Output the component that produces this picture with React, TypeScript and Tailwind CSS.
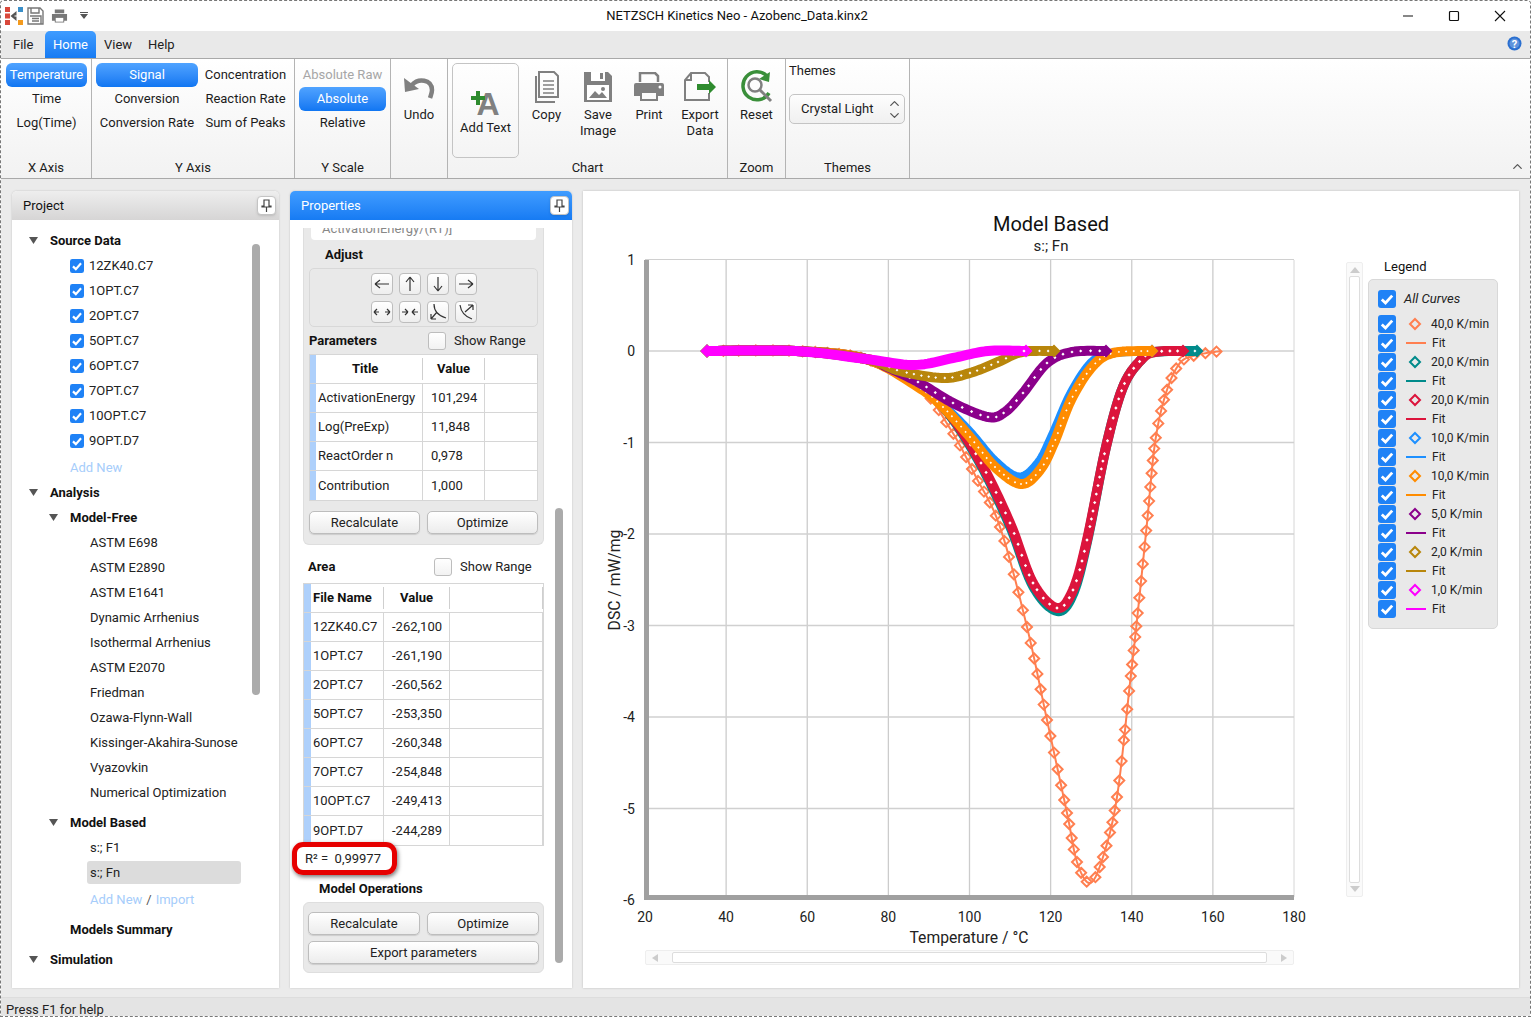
import { ChevronUp, ChevronDown } from 'lucide-react';

const FONT = "font-['Roboto',sans-serif]";

type Pt = [number, number];

function sample(keys: Pt[], seg = 12): Pt[] {
  const out: Pt[] = [];
  for (let i = 0; i < keys.length - 1; i++) {
    const p0 = keys[Math.max(i - 1, 0)];
    const p1 = keys[i];
    const p2 = keys[i + 1];
    const p3 = keys[Math.min(i + 2, keys.length - 1)];
    for (let k = 0; k < seg; k++) {
      const t = k / seg;
      const f = (a: number, b: number, c: number, d: number) =>
        0.5 * (2 * b + (c - a) * t + (2 * a - 5 * b + 4 * c - d) * t * t + (3 * b - a - 3 * c + d) * t * t * t);
      out.push([f(p0[0], p1[0], p2[0], p3[0]), f(p0[1], p1[1], p2[1], p3[1])]);
    }
  }
  out.push(keys[keys.length - 1]);
  return out;
}

function diamond([x, y]: Pt, r: number) {
  return `M${x.toFixed(1)} ${(y - r).toFixed(1)}L${(x + r).toFixed(1)} ${y.toFixed(1)}L${x.toFixed(1)} ${(y + r).toFixed(1)}L${(x - r).toFixed(1)} ${y.toFixed(1)}Z`;
}

function markers(pts: Pt[], spacing: number, r: number) {
  let d = '';
  let acc = spacing;
  for (let i = 0; i < pts.length; i++) {
    if (i > 0) acc += Math.hypot(pts[i][0] - pts[i - 1][0], pts[i][1] - pts[i - 1][1]);
    if (acc >= spacing) {
      acc = 0;
      d += diamond(pts[i], r);
    }
  }
  return d;
}

const base: Pt[] = [[707, 351], [796, 351], [866, 359]];

// dense series read as a fat band with small white holes, only 40 K/min shows open diamonds
const series: { color: string; band?: number; dot?: number; gap?: number; keys: Pt[] }[] = [
  {
    color: '#ff7f50',
    keys: [...base, [918, 385], [951, 430], [976, 477], [1000, 527], [1027, 627], [1047, 720], [1067, 813], [1077, 862], [1090, 883], [1103, 857], [1117, 797], [1130, 683], [1137, 620], [1147, 523], [1155, 443], [1166, 393], [1180, 363], [1197, 355], [1221, 351]],
  },
  {
    color: '#008b8b', band: 10, dot: 1.5, gap: 7.5,
    keys: [...base, [918, 385], [949, 414], [981, 465], [1010, 526], [1033, 586], [1057, 611], [1073, 594], [1087, 542], [1106, 447], [1123, 387], [1141, 360], [1155, 352], [1197, 351]],
  },
  {
    color: '#dc143c', band: 10, dot: 1.7, gap: 7.5,
    keys: [...base, [918, 385], [949, 413], [981, 463], [1010, 523], [1033, 583], [1057, 608], [1073, 590], [1087, 540], [1106, 447], [1123, 387], [1141, 360], [1155, 352], [1183, 351]],
  },
  {
    color: '#1e90ff', band: 9,
    keys: [...base, [918, 385], [943, 405], [970, 432], [995, 461], [1019, 477], [1038, 463], [1052, 436], [1071, 393], [1092, 362], [1113, 353], [1152, 351]],
  },
  {
    color: '#ff8c00', band: 10, dot: 1.2, gap: 5.5,
    keys: [...base, [918, 387], [943, 407], [970, 437], [995, 467], [1021, 484], [1040, 470], [1054, 443], [1071, 400], [1092, 367], [1113, 353], [1152, 351]],
  },
  {
    color: '#8b008b', band: 10, dot: 1.6, gap: 7.5,
    keys: [...base, [887, 367], [918, 382], [953, 403], [988, 417], [1005, 412], [1023, 393], [1047, 363], [1072, 352], [1106, 351]],
  },
  {
    color: '#b8860b', band: 10, dot: 1.4, gap: 7,
    keys: [...base, [900, 371], [942, 378], [970, 373], [998, 362], [1022, 352], [1054, 351]],
  },
  {
    color: '#ff00ff', band: 10,
    keys: [[707, 351], [796, 351], [866, 359], [914, 365], [953, 358], [988, 351], [1026, 351]],
  },
];

const xTicks = [40, 60, 80, 100, 120, 140, 160];
const xPos = (v: number) => 645 + ((v - 20) / 160) * 649;
const yPos = (v: number) => 351 - v * 91.5;

function Chart() {
  return (
    <svg viewBox="583 191 757 758" className="w-[757px] h-[758px] block">
      <text x="1051" y="231" textAnchor="middle" fontSize="20" fill="#111">Model Based</text>
      <text x="1051" y="251" textAnchor="middle" fontSize="15" fill="#222">s:; Fn</text>
      {xTicks.map((v) => (
        <line key={v} x1={xPos(v)} x2={xPos(v)} y1="260" y2="897" stroke="#cccccc" strokeWidth="1.3" />
      ))}
      <line x1="1294" x2="1294" y1="260" y2="897" stroke="#d6d6d6" strokeWidth="1" />
      {[1, 0, -1, -2, -3, -4, -5].map((v) => (
        <line key={v} x1="645" x2="1294" y1={yPos(v)} y2={yPos(v)} stroke="#d0d0d0" strokeWidth={v === 1 ? 1 : 1.3} />
      ))}
      {series.map((s) => {
        const pts = sample(s.keys);
        const line = pts.map((p) => p.join(',')).join(' ');
        if (!s.band) {
          return (
            <g key={s.color}>
              <polyline points={line} fill="none" stroke={s.color} strokeWidth="2" />
              <path d={markers(pts, 10.5, 5)} fill="none" stroke={s.color} strokeWidth="2" />
            </g>
          );
        }
        return (
          <g key={s.color}>
            <polyline points={line} fill="none" stroke={s.color} strokeWidth={s.band} strokeLinejoin="round" />
            <path d={diamond(pts[0], 6.5) + diamond(pts[pts.length - 1], 6.5)} fill={s.color} />
            {s.dot && <path d={markers(pts, s.gap ?? 7, s.dot)} fill="#fff" />}
          </g>
        );
      })}
      <path d={diamond([1024, 351], 1.6)} fill="#fff" />
      <rect x="644" y="260" width="5" height="640" fill="#a0a0a0" />
      <rect x="644" y="895" width="650" height="5" fill="#a0a0a0" />
      {[1, 0, -1, -2, -3, -4, -5, -6].map((v) => (
        <text key={v} x="635" y={(v === -6 ? 900 : yPos(v)) + 5} textAnchor="end" fontSize="14" fill="#222">{v}</text>
      ))}
      {[20, 40, 60, 80, 100, 120, 140, 160, 180].map((v) => (
        <text key={v} x={xPos(v)} y="922" textAnchor="middle" fontSize="14" fill="#222">{v}</text>
      ))}
      <text x="969" y="943" textAnchor="middle" fontSize="15.7" fill="#222">Temperature / °C</text>
      <text x="620" y="580" textAnchor="middle" fontSize="15.7" fill="#222" transform="rotate(-90 620 580)">DSC / mW/mg</text>
    </svg>
  );
}

function Check({ size = 14 }: { size?: number }) {
  return (
    <svg width={size} height={size} viewBox="0 0 18 18" className="shrink-0 block">
      <rect width="18" height="18" rx="3" fill="#1f82f6" />
      <path d="M3.800 9.500 L7.500 13 L14.200 5.600" fill="none" stroke="#fff" strokeWidth="2.800" />
    </svg>
  );
}

function RibbonItem({ label, on, muted }: { label: string; on?: boolean; muted?: boolean }) {
  return (
    <div
      className={`h-[24px] flex items-center justify-center rounded-[6px] text-[13px] whitespace-nowrap ${
        on ? 'bg-gradient-to-b from-[#4fa3ff] to-[#0f76f2] text-white' : muted ? 'text-[#a6a6a6]' : 'text-[#1c1c1c]'
      }`}
    >
      {label}
    </div>
  );
}

function Group({ width, label, children }: { width: string; label: string; children: React.ReactNode }) {
  return (
    <div className={`${width} shrink-0 h-full flex flex-col border-r border-[#b4b4b4]`}>
      <div className="flex-1 min-h-0">{children}</div>
      <div className="h-[21px] flex items-center justify-center text-[13px] text-[#1c1c1c]">{label}</div>
    </div>
  );
}

function LargeBtn({ w, label, top = 'mt-[10px]', children }: { w: string; label: string; top?: string; children: React.ReactNode }) {
  return (
    <div className={`${w} flex flex-col items-center text-[13px] leading-[16px] text-[#1c1c1c] text-center`}>
      <div className={`h-[36px] w-full flex items-center justify-center mb-[2px] ${top}`}>{children}</div>
      <div>{label}</div>
    </div>
  );
}

function Pin() {
  return (
    <div className="w-[19px] h-[19px] rounded-[4px] bg-white border border-[#c4c4c4] shadow-sm flex items-center justify-center">
      <svg width="11" height="13" viewBox="0 0 11 13">
        <path d="M3 1h5v6h2v1H1V7h2zM5.500 8v5" fill="none" stroke="#444" strokeWidth="1.200" />
      </svg>
    </div>
  );
}

function Tri({ className = '' }: { className?: string }) {
  return (
    <svg width="9" height="7" viewBox="0 0 9 7" className={`block shrink-0 ${className}`}>
      <path d="M0 0h9L4.500 7z" fill="#555" />
    </svg>
  );
}

function Head({ label, pad, className = '' }: { label: string; pad: string; className?: string }) {
  return (
    <div className={`h-[25px] flex items-center ${pad} ${className}`}>
      <Tri />
      <span className="ml-[12px] text-[13px] font-bold text-[#111]">{label}</span>
    </div>
  );
}

const sourceFiles = ['12ZK40.C7', '1OPT.C7', '2OPT.C7', '5OPT.C7', '6OPT.C7', '7OPT.C7', '10OPT.C7', '9OPT.D7'];
const modelFree = ['ASTM E698', 'ASTM E2890', 'ASTM E1641', 'Dynamic Arrhenius', 'Isothermal Arrhenius', 'ASTM E2070', 'Friedman', 'Ozawa-Flynn-Wall', 'Kissinger-Akahira-Sunose', 'Vyazovkin', 'Numerical Optimization'];

function ProjectPanel() {
  return (
    <div className="w-[267px] shrink-0 flex flex-col bg-white shadow-[0_0_2px_#bbb] rounded-t-[5px]">
      <div className="h-[29px] shrink-0 flex items-center justify-between pl-[11px] pr-[3px] rounded-t-[5px] bg-gradient-to-b from-[#eeeeee] to-[#d6d5d5] text-[13px] text-[#111]">
        Project
        <Pin />
      </div>
      <div className="relative flex-1 pt-[8px]">
        <div className="absolute left-[240px] top-[24px] w-[8px] h-[451px] rounded-[4px] bg-[#ababab]" />
        <Head label="Source Data" pad="pl-[17px]" />
        {sourceFiles.map((f) => (
          <div key={f} className="h-[25px] flex items-center pl-[58px] gap-[5px] text-[13px] text-[#222]">
            <Check />
            {f}
          </div>
        ))}
        <div className="h-[25px] mt-[2px] flex items-center pl-[58px] text-[13px] text-[#a6cdfb]">Add New</div>
        <Head label="Analysis" pad="pl-[17px]" />
        <Head label="Model-Free" pad="pl-[37px]" />
        {modelFree.map((m) => (
          <div key={m} className="h-[25px] flex items-center pl-[78px] text-[13px] text-[#222]">{m}</div>
        ))}
        <Head label="Model Based" pad="pl-[37px]" className="mt-[5px]" />
        <div className="h-[25px] flex items-center pl-[78px] text-[13px] text-[#222]">s:; F1</div>
        <div className="h-[25px] py-[1px] ml-[75px] w-[154px]">
          <div className="h-[23px] flex items-center pl-[3px] rounded-[3px] bg-[#dcdcdc] text-[13px] text-[#222]">s:; Fn</div>
        </div>
        <div className="h-[25px] mt-[2px] flex items-center pl-[78px] text-[13px] text-[#a6cdfb]">
          Add New <span className="text-[#555] mx-[4px]">/</span> Import
        </div>
        <div className="h-[25px] mt-[5px] flex items-center pl-[58px] text-[13px] font-bold text-[#111]">Models Summary</div>
        <Head label="Simulation" pad="pl-[17px]" className="mt-[5px]" />
      </div>
    </div>
  );
}

function Btn({ label, className = '' }: { label: string; className?: string }) {
  return (
    <div className={`h-[23px] flex items-center justify-center rounded-[5px] border border-[#bdbdbd] bg-gradient-to-b from-white to-[#ececec] shadow-[0_1px_1px_#ccc] text-[13px] text-[#222] ${className}`}>
      {label}
    </div>
  );
}

function Empty({ className = '' }: { className?: string }) {
  return <div className={`w-[18px] h-[18px] rounded-[3px] border border-[#bdbdbd] bg-gradient-to-b from-white to-[#f2f2f2] ${className}`} />;
}

function AdjustBtn({ d }: { d: string }) {
  return (
    <div className="w-[22px] h-[22px] rounded-[4px] border border-[#bdbdbd] bg-gradient-to-b from-white to-[#eeeeee] flex items-center justify-center">
      <svg width="18" height="18" viewBox="0 0 18 18">
        <path d={d} fill="none" stroke="#333" strokeWidth="1.200" />
      </svg>
    </div>
  );
}

const adjustIcons = [
  'M2 9h14M2 9l5-4M2 9l5 4',
  'M9 2v14M9 2L5 7M9 2l4 5',
  'M9 16V2M9 16l-4-5M9 16l4-5',
  'M16 9H2M16 9l-5-4M16 9l-5 4',
  'M1 9h5M1 9l3-3M1 9l3 3M17 9h-5M17 9l-3-3M17 9l-3 3',
  'M7 9H1M7 9L4 6M7 9l-3 3M11 9h6M11 9l3-3M11 9l3 3',
  'M5 1c0 8 5 12 12 14M2 16L8 9M2 16h5M2 16v-5',
  'M3 2c1 7 6 12 12 14M8 9l8-7M16 2h-5M16 2v5',
];

function DataTable({ cols, strip, rows, header, firstPad }: { cols: string[]; strip: string; rows: string[][]; header: string[]; firstPad: string }) {
  return (
    <div className="border border-[#d6d6d6] bg-white text-[13px] text-[#222]">
      <div className="flex h-[29px] border-b border-[#d6d6d6]">
        <div className={`${strip} bg-[#aed0fb] shrink-0`} />
        {header.map((h, i) => (
          <div key={h} className={`${cols[i]} shrink-0 font-bold text-[#111] flex items-center`}>
            <div className={`h-[22px] w-full flex items-center border-r border-[#cfcfcf] ${i === 0 ? firstPad : 'justify-center'}`}>{h}</div>
          </div>
        ))}
      </div>
      {rows.map((r, j) => (
        <div key={r[0]} className={`flex h-[29px] ${j < rows.length - 1 ? 'border-b border-[#d6d6d6]' : ''}`}>
          <div className={`${strip} bg-[#aed0fb] shrink-0`} />
          {r.map((c, i) => (
            <div key={i} className={`${cols[i]} shrink-0 flex items-center border-r border-[#d6d6d6] ${i === 0 ? 'pl-[2px]' : 'pl-[8px]'}`}>{c}</div>
          ))}
        </div>
      ))}
    </div>
  );
}

function PropertiesPanel() {
  return (
    <div className="w-[282px] shrink-0 flex flex-col bg-white rounded-t-[5px] shadow-[0_0_2px_#bbb]">
      <div className="h-[29px] shrink-0 flex items-center justify-between pl-[11px] pr-[3px] rounded-t-[5px] bg-gradient-to-b from-[#3f9cff] to-[#167bf3] text-[13px] text-white">
        Properties
        <Pin />
      </div>
      <div className="relative flex-1 pt-[8px] pl-[13px] overflow-hidden">
        <div className="absolute left-[265px] top-[288px] w-[8px] h-[455px] rounded-[4px] bg-[#ababab]" />
        <div className="w-[241px] rounded-b-[6px] bg-[#e9e9e9] px-[5px] pb-[10px] border border-t-0 border-[#dedede]">
          <div className="h-[12px] mx-[2px] bg-white rounded-b-[4px] overflow-hidden pl-[11px] text-[13px] leading-[12px] text-[#888]">
            <div className="-mt-[7px] leading-[16px]">ActivationEnergy/(RT)]</div>
          </div>
          <div className="h-[28px] flex items-center pl-[16px] pt-[2px] text-[13px] font-bold text-[#111]">Adjust</div>
          <div className="h-[59px] rounded-[5px] border border-[#d8d8d8] flex flex-col items-center justify-center gap-[6px]">
            <div className="flex gap-[6px]">
              {adjustIcons.slice(0, 4).map((d) => <AdjustBtn key={d} d={d} />)}
            </div>
            <div className="flex gap-[6px]">
              {adjustIcons.slice(4).map((d) => <AdjustBtn key={d} d={d} />)}
            </div>
          </div>
          <div className="h-[27px] flex items-center text-[13px] text-[#222]">
            <span className="font-bold text-[#111] w-[119px]">Parameters</span>
            <Empty />
            <span className="ml-[8px]">Show Range</span>
          </div>
          <DataTable
            strip="w-[6px]"
            firstPad="pl-[36px]"
            cols={['w-[107px]', 'w-[62px]', 'w-[53px]']}
            header={['Title', 'Value', ' ']}
            rows={[
              ['ActivationEnergy', '101,294', ''],
              ['Log(PreExp)', '11,848', ''],
              ['ReactOrder n', '0,978', ''],
              ['Contribution', '1,000', ''],
            ]}
          />
          <div className="flex gap-[7px] mt-[10px]">
            <Btn label="Recalculate" className="w-[111px]" />
            <Btn label="Optimize" className="w-[111px]" />
          </div>
        </div>
        <div className="w-[241px] h-[38px] pt-[6px] flex items-center text-[13px] text-[#222]">
          <span className="font-bold text-[#111] ml-[5px] w-[126px]">Area</span>
          <Empty />
          <span className="ml-[8px]">Show Range</span>
        </div>
        <div className="w-[241px]">
          <DataTable
            strip="w-[7px]"
            firstPad="pl-[2px]"
            cols={['w-[73px]', 'w-[66px]', 'w-[93px]']}
            header={['File Name', 'Value', ' ']}
            rows={[
              ['12ZK40.C7', '-262,100', ''],
              ['1OPT.C7', '-261,190', ''],
              ['2OPT.C7', '-260,562', ''],
              ['5OPT.C7', '-253,350', ''],
              ['6OPT.C7', '-260,348', ''],
              ['7OPT.C7', '-254,848', ''],
              ['10OPT.C7', '-249,413', ''],
              ['9OPT.D7', '-244,289', ''],
            ]}
          />
        </div>
        <div className="relative h-[26px] flex items-center pl-[2px] text-[13px] text-[#222] whitespace-pre">
          R² =  0,99977
          <div className="absolute -left-[11px] -top-[4px] w-[105px] h-[33px] rounded-[11px] border-[5px] border-[#e60000] shadow-[1px_2px_4px_#777]" />
        </div>
        <div className="h-[30px] pt-[3px] flex items-center pl-[16px] text-[13px] font-bold text-[#111]">Model Operations</div>
        <div className="w-[241px] rounded-[6px] bg-[#e9e9e9] border border-[#dedede] px-[4px] pt-[9px] pb-[8px] flex flex-col gap-[6px]">
          <div className="flex gap-[7px]">
            <Btn label="Recalculate" className="w-[112px]" />
            <Btn label="Optimize" className="w-[112px]" />
          </div>
          <Btn label="Export parameters" className="w-[231px]" />
        </div>
      </div>
    </div>
  );
}

const legend: [string, string][] = [
  ['40,0 K/min', '#ff7f50'],
  ['20,0 K/min', '#008b8b'],
  ['20,0 K/min', '#dc143c'],
  ['10,0 K/min', '#1e90ff'],
  ['10,0 K/min', '#ff8c00'],
  ['5,0 K/min', '#8b008b'],
  ['2,0 K/min', '#b8860b'],
  ['1,0 K/min', '#ff00ff'],
];

function Legend() {
  return (
    <div className="w-[130px] ml-[5px] shrink-0 pt-[64px]">
      <div className="h-[24px] flex items-center pl-[16px] text-[13px] text-[#111]">Legend</div>
      <div className="h-[350px] rounded-[5px] bg-[#e9e9e9] border border-[#d8d8d8] pl-[9px] pt-[9px]">
        <div className="h-[19px] flex items-center text-[13px] italic text-[#222]">
          <Check size={18} />
          <span className="ml-[8px]">All Curves</span>
        </div>
        <div className="mt-[6px]">
          {legend.map(([label, color], i) => (
            <div key={i}>
              <div className="h-[19px] flex items-center text-[12px] text-[#222]">
                <Check size={18} />
                <svg width="14" height="14" viewBox="0 0 14 14" className="ml-[12px] shrink-0">
                  <path d="M7 2l5 5-5 5-5-5z" fill="none" stroke={color} strokeWidth="2" />
                </svg>
                <span className="ml-[9px] whitespace-nowrap">{label}</span>
              </div>
              <div className="h-[19px] flex items-center text-[12px] text-[#222]">
                <Check size={18} />
                <div className="ml-[10px] w-[20px] h-[2px]" style={{ backgroundColor: color }} />
                <span className="ml-[6px]">Fit</span>
              </div>
            </div>
          ))}
        </div>
      </div>
    </div>
  );
}

function ChartPanel() {
  return (
    <div className="w-[936px] shrink-0 flex bg-white shadow-[0_0_2px_#bbb]">
      <div className="w-[757px] shrink-0">
        <Chart />
        <div className="ml-[62px] mt-[1px] w-[649px] h-[15px] flex items-center gap-[14px] px-[6px] bg-[#fafafa] border border-[#eeeeee] rounded-[2px]">
          <svg width="6" height="8" viewBox="0 0 6 8" className="shrink-0"><path d="M6 0v8L0 4z" fill="#cccccc" /></svg>
          <div className="flex-1 h-[11px] border border-[#dddddd] rounded-[2px] bg-white" />
          <svg width="6" height="8" viewBox="0 0 6 8" className="shrink-0"><path d="M0 0v8l6-4z" fill="#cccccc" /></svg>
        </div>
      </div>
      <div className="ml-[6px] mt-[71px] w-[17px] h-[635px] shrink-0 bg-[#fafafa] border border-[#eeeeee] rounded-[2px] flex flex-col items-center justify-between py-[4px]">
        <svg width="10" height="6" viewBox="0 0 10 6"><path d="M0 6h10L5 0z" fill="#cccccc" /></svg>
        <div className="flex-1 w-[11px] my-[3px] border border-[#dddddd] rounded-[2px] bg-white" />
        <svg width="10" height="6" viewBox="0 0 10 6"><path d="M0 0h10L5 6z" fill="#cccccc" /></svg>
      </div>
      <Legend />
    </div>
  );
}

function Logo() {
  return (
    <svg width="18" height="20" viewBox="0 0 18 20" className="block">
      <rect x="0" y="1" width="5" height="5" fill="#d9483b" />
      <rect x="0" y="7.500" width="5" height="5" fill="#d9483b" />
      <rect x="0" y="14" width="5" height="5" fill="#d9483b" />
      <path d="M5.500 10l6-5v4.500h-2v1h2V15z" fill="#555" />
      <rect x="13" y="1" width="5" height="5" fill="#3a8fc9" />
      <rect x="13" y="14" width="5" height="5" fill="#f39a1e" />
    </svg>
  );
}

function TitleBar() {
  return (
    <div className="h-[30px] shrink-0 flex items-center relative bg-white">
      <div className="flex items-center pl-[4px]">
        <Logo />
        <svg width="17" height="18" viewBox="0 0 17 18" className="ml-[4px]">
          <path d="M1 1h12l3 3v13H1zM4 1v5h8V1M3 9h11v8H3M5 11.500h7M5 14h7" fill="none" stroke="#777" strokeWidth="1.400" />
        </svg>
        <svg width="17" height="16" viewBox="0 0 18 16" className="ml-[7px]">
          <path d="M4 5V1h10v4M1 6h16v7h-3v2H4v-2H1z" fill="#777" />
          <rect x="5" y="10" width="8" height="4" fill="#fff" />
        </svg>
        <svg width="10" height="8" viewBox="0 0 10 8" className="ml-[11px]">
          <path d="M1 0h8v1H1zM1 2h8L5 7z" fill="#555" />
        </svg>
      </div>
      <div className="absolute left-0 w-[1472px] text-center text-[13px] text-[#111] pointer-events-none">NETZSCH Kinetics Neo - Azobenc_Data.kinx2</div>
      <div className="ml-auto flex items-center pr-[22px] gap-[30px]">
        <svg width="16" height="12" viewBox="0 0 16 12"><path d="M3 6h10" stroke="#111" strokeWidth="1.200" /></svg>
        <svg width="16" height="12" viewBox="0 0 16 12"><rect x="3.500" y="1.500" width="9" height="9" rx="1" fill="none" stroke="#111" strokeWidth="1.200" /></svg>
        <svg width="16" height="12" viewBox="0 0 16 12"><path d="M3 1l10 10M13 1L3 11" stroke="#111" strokeWidth="1.100" /></svg>
      </div>
    </div>
  );
}

function MenuBar() {
  return (
    <div className="h-[28px] shrink-0 flex items-stretch bg-[#e9e9e9] border-b border-[#a9a9a9] text-[13px] text-[#222] relative">
      <div className="w-[44px] flex items-center pl-[12px]">File</div>
      <div className="w-[51px] flex items-center justify-center rounded-t-[5px] bg-gradient-to-b from-[#3f9cff] to-[#167bf3] text-white">Home</div>
      <div className="w-[52px] flex items-center pl-[8px]">View</div>
      <div className="flex items-center">Help</div>
      <svg width="15" height="15" viewBox="0 0 15 15" className="absolute right-[8px] top-[5px]">
        <circle cx="7.500" cy="7.500" r="7" fill="#2a6fd0" />
        <circle cx="7.500" cy="7.500" r="5" fill="#fff" fillOpacity="0.25" />
        <text x="7.500" y="11.500" textAnchor="middle" fontSize="11" fontWeight="700" fill="#fff">?</text>
      </svg>
    </div>
  );
}

function Ribbon() {
  return (
    <div className="h-[120px] shrink-0 flex bg-gradient-to-b from-white to-[#f2f2f2] border-b border-[#a9a9a9] relative">
      <Group width="w-[91px]" label="X Axis">
        <div className="pt-[4px] pl-[5px] w-[86px]">
          <RibbonItem label="Temperature" on />
          <RibbonItem label="Time" />
          <RibbonItem label="Log(Time)" />
        </div>
      </Group>
      <Group width="w-[203px]" label="Y Axis">
        <div className="pt-[4px] pl-[4px] grid grid-cols-[102px_95px] gap-x-0">
          <RibbonItem label="Signal" on />
          <RibbonItem label="Concentration" />
          <RibbonItem label="Conversion" />
          <RibbonItem label="Reaction Rate" />
          <RibbonItem label="Conversion Rate" />
          <RibbonItem label="Sum of Peaks" />
        </div>
      </Group>
      <Group width="w-[96px]" label="Y Scale">
        <div className="pt-[4px] pl-[4px] w-[91px]">
          <RibbonItem label="Absolute Raw" muted />
          <RibbonItem label="Absolute" on />
          <RibbonItem label="Relative" />
        </div>
      </Group>
      <Group width="w-[57px]" label="">
        <LargeBtn w="w-full" label="Undo">
          <svg width="32" height="24" viewBox="0 0 32 24">
            <path d="M9 10c6-7 20-6 20 5 0 3-1 5-2 8" fill="none" stroke="#808080" strokeWidth="4.500" />
            <path d="M1 3l1 14 14-3z" fill="#808080" />
          </svg>
        </LargeBtn>
      </Group>
      <Group width="w-[280px]" label="Chart">
        <div className="flex pt-[4px]">
          <div className="ml-[4px] w-[67px] h-[95px] rounded-[5px] border border-[#c4c4c4] flex flex-col items-center pt-[22px] text-[13px] text-[#1c1c1c]">
            <svg width="40" height="32" viewBox="0 0 40 32">
              <text x="22" y="29" textAnchor="middle" fontSize="32" fontWeight="700" fontFamily="Liberation Sans" fill="#808080">A</text>
              <path d="M5 10h5V5h4v5h5v4h-5v5h-4v-5H5z" fill="#2e8b2e" />
            </svg>
            <span>Add Text</span>
          </div>
          <LargeBtn w="w-[53px] ml-[1px]" top="mt-[6px]" label="Copy">
            <svg width="26" height="32" viewBox="0 0 26 32">
              <path d="M5 1h15l4 4v21H5z" fill="none" stroke="#808080" strokeWidth="2" />
              <path d="M2 5v26h19" fill="none" stroke="#808080" strokeWidth="2" />
              <path d="M9 10h11M9 14h11M9 18h11M9 22h11" stroke="#808080" strokeWidth="1.500" />
            </svg>
          </LargeBtn>
          <LargeBtn w="w-[50px]" top="mt-[6px]" label="Save Image">
            <svg width="30" height="32" viewBox="0 0 30 32">
              <path d="M1 1h24l4 4v26H1z" fill="#808080" />
              <rect x="8" y="1" width="14" height="9" fill="#fff" />
              <rect x="17" y="2" width="3" height="6" fill="#808080" />
              <rect x="4" y="14" width="22" height="15" fill="#fff" />
              <path d="M6 27l6-7 4 4 3-3 5 6z" fill="#808080" />
              <circle cx="20" cy="18" r="2" fill="#808080" />
            </svg>
          </LargeBtn>
          <LargeBtn w="w-[52px]" top="mt-[6px]" label="Print">
            <svg width="32" height="30" viewBox="0 0 32 30">
              <path d="M7 10V1h15l3 3v6" fill="none" stroke="#808080" strokeWidth="2.500" />
              <path d="M3 11h26a2 2 0 0 1 2 2v11h-6v-5H7v5H1V13a2 2 0 0 1 2-2z" fill="#808080" />
              <path d="M8 20h16v8H8z" fill="none" stroke="#808080" strokeWidth="2" />
              <circle cx="27" cy="15" r="1.500" fill="#fff" />
            </svg>
          </LargeBtn>
          <LargeBtn w="w-[50px]" top="mt-[6px]" label="Export Data">
            <svg width="32" height="30" viewBox="0 0 32 30">
              <path d="M7 1h14l4 4v5M25 21v7H1V8l6-7v7H1" fill="none" stroke="#808080" strokeWidth="2" />
              <path d="M13 12h12V8l7 7-7 7v-4H13z" fill="#2e8b2e" />
            </svg>
          </LargeBtn>
        </div>
      </Group>
      <Group width="w-[58px]" label="Zoom">
        <LargeBtn w="w-full" label="Reset">
          <svg width="34" height="34" viewBox="0 0 34 34">
            <path d="M27 6a14 14 0 1 0 2 17" fill="none" stroke="#3a8f3a" strokeWidth="3.500" />
            <path d="M30 2l-1 10-10-3z" fill="#3a8f3a" />
            <circle cx="15" cy="15" r="6.500" fill="none" stroke="#808080" strokeWidth="2.500" />
            <path d="M20 20l11 11" stroke="#808080" strokeWidth="3" />
          </svg>
        </LargeBtn>
      </Group>
      <Group width="w-[124px]" label="Themes">
        <div className="pl-[3px] pt-[3px] text-[13px] text-[#1c1c1c]">
          <div className="h-[18px] flex items-center">Themes</div>
          <div className="mt-[14px] w-[116px] h-[30px] rounded-[5px] border border-[#c4c4c4] bg-gradient-to-b from-[#fdfdfd] to-[#f0f0f0] flex items-center pl-[11px] pr-[2px] justify-between">
            Crystal Light
            <div className="flex flex-col -space-y-[3px]">
              <ChevronUp size={15} strokeWidth={2} color="#555" />
              <ChevronDown size={15} strokeWidth={2} color="#555" />
            </div>
          </div>
        </div>
      </Group>
      <ChevronUp size={15} color="#555" className="absolute right-[5px] bottom-[4px]" />
    </div>
  );
}

export default function App() {
  return (
    <div className={`${FONT} w-[1531px] h-[1017px] flex flex-col overflow-hidden bg-white border border-dashed border-[#777] rounded-t-[4px]`}>
      <TitleBar />
      <MenuBar />
      <Ribbon />
      <div className="flex-1 min-h-0 flex gap-[11px] pl-[11px] pt-[12px] pb-[9px] bg-[#ebebeb]">
        <ProjectPanel />
        <PropertiesPanel />
        <ChartPanel />
      </div>
      <div className="h-[19px] shrink-0 flex items-center pl-[5px] pt-[5px] bg-[#e4e4e4] border-t border-[#dddddd] text-[13px] text-[#222]">Press F1 for help</div>
    </div>
  );
}
